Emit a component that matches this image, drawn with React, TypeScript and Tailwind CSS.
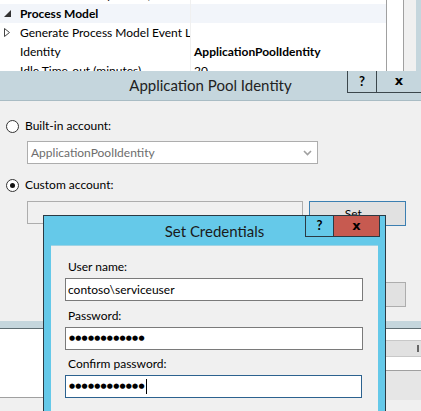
import React from 'react';

const gridRows = [
  { name: 'Processor Affinity Mask (64-bit option)', value: '4294967295' },
  { name: 'Process Model', value: '', section: true },
  { name: 'Generate Process Model Event Log Entry', value: '', collapsed: true },
  { name: 'Identity', value: 'ApplicationPoolIdentity', bold: true },
  { name: 'Idle Time-out (minutes)', value: '20' },
];

const Radio = ({ checked, label }: { checked?: boolean; label: string }) => (
  <div className="flex items-center h-[16px]">
    <div className="w-[13px] h-[13px] rounded-full border border-[#333] bg-white flex items-center justify-center">
      {checked && <div className="w-[5px] h-[5px] rounded-full bg-[#111]" />}
    </div>
    <span className="ml-[6px] leading-[16px]">{label}</span>
  </div>
);

// masked password glyphs
const Dots = () => (
  <span className="font-['DejaVu_Sans',sans-serif] text-[7px] tracking-[0.2px] leading-none">
    ●●●●●●●●●●●●
  </span>
);

const IisBackground = () => (
  <div className="flex flex-col h-full">
    <div className="flex h-[71px] bg-white">
      <div className="w-[386px] overflow-hidden">
        <div className="-mt-[15px]">
          {gridRows.map((row) => (
            <div
              key={row.name}
              className={`flex h-[19px] items-center ${row.section ? 'bg-[#f2f5fa]' : 'bg-white'}`}
            >
              <div className="w-[20px] h-full flex items-center justify-center pr-[6px]">
                {row.section && (
                  <svg width="7" height="7" viewBox="0 0 7 7">
                    <polygon points="7,0 7,7 0,7" fill="#333" />
                  </svg>
                )}
                {row.collapsed && (
                  <svg width="6" height="9" viewBox="0 0 6 9">
                    <polygon points="0.5,0.5 5.5,4.5 0.5,8.5" fill="none" stroke="#444" />
                  </svg>
                )}
              </div>
              <div
                className={`w-[170px] whitespace-nowrap overflow-hidden ${row.section ? 'font-bold' : ''}`}
              >
                {row.name}
              </div>
              <div className="w-px h-full bg-[#f0f0f0]" />
              <div className={`pl-[3px] whitespace-nowrap ${row.bold ? 'font-bold' : ''}`}>
                {row.value}
              </div>
            </div>
          ))}
        </div>
      </div>
      <div className="w-px bg-[#a0a0a0]" />
      <div className="w-[16px] bg-white" />
      <div className="w-px bg-[#a0a0a0]" />
      <div className="w-[12px] bg-[#f0f0f0]" />
      <div className="flex-1 bg-[#c5d6dd]" />
    </div>
    <div className="h-[250px]" />
    <div className="h-[7px] bg-[#c5d6dd]" />
    <div className="h-px bg-[#5f6d73]" />
    <div className="flex flex-1">
      <div className="flex-1 flex flex-col">
        <div className="h-[69px] bg-white border-b border-[#a0a0a0]" />
        <div className="flex-1 bg-[#f0f0f0]" />
      </div>
      <div className="w-[40px] flex flex-col">
        <div className="h-[11px] bg-white" />
        <div className="h-[17px] bg-[#e1e1e1] border-y border-[#c8c8c8] flex items-center justify-end gap-[2px] -mr-[2px]">
          <div className="w-[2px] h-[7px] bg-[#666]" />
          <div className="w-[2px] h-[7px] bg-[#666]" />
        </div>
        <div className="h-[14px] bg-white border-b border-[#a0a0a0]" />
        <div className="h-[29px] bg-[#e6e6e6]" />
        <div className="flex-1 bg-[#f0f0f0]" />
      </div>
    </div>
  </div>
);

const PoolIdentityDialog = () => (
  <div className="absolute left-0 top-[71px] w-[421px] h-[250px] flex flex-col bg-[#f0f0f0]">
    <div className="relative h-[30px] bg-[#c5d6dd] border-b border-[#a9bcc4] flex items-center justify-center">
      <span className="text-[15px] text-[#222]">Application Pool Identity</span>
      <div className="absolute top-0 right-0 flex">
        <div className="w-[29px] h-[22px] border-l border-b border-[#3c474c] flex items-center justify-center font-bold text-[13px]">
          ?
        </div>
        <div className="w-[45px] h-[22px] border-l border-b border-[#3c474c] flex items-center justify-center font-['DejaVu_Sans',sans-serif] font-bold text-[13px] pb-[1px]">
          x
        </div>
      </div>
    </div>
    <div className="flex flex-col pl-[6px] pt-[17px]">
      <Radio label="Built-in account:" />
      <div className="mt-[7px] ml-[21px] w-[291px] h-[23px] bg-white border border-[#adadad] flex items-center justify-between pl-[3px] pr-[5px] text-[#6d6d6d]">
        <span>ApplicationPoolIdentity</span>
        <svg width="9" height="6" viewBox="0 0 9 6">
          <polyline points="1,1 4.5,4.5 8,1" fill="none" stroke="#a0a0a0" strokeWidth="1.6" />
        </svg>
      </div>
      <div className="mt-[13px]">
        <Radio checked label="Custom account:" />
      </div>
      <div className="mt-[8px] ml-[21px] flex items-start">
        <div className="w-[276px] h-[23px] border border-[#adadad] bg-[#f0f0f0]" />
        <div className="ml-[6px] w-[97px] h-[25px] border border-[#3c7fb1] bg-[#e1e1e1] flex items-center justify-center">
          Set...
        </div>
      </div>
      <div className="mt-[56px] flex justify-end pr-[15px]">
        <div className="w-[75px] h-[25px] border border-[#adadad] bg-[#e1e1e1]" />
      </div>
    </div>
  </div>
);

const CredentialsDialog = () => (
  <div className="absolute left-[43px] top-[215px] w-[343px] h-[205px] border border-[#2b3a44] bg-[#65c9e9] flex flex-col">
    <div className="relative h-[29px] flex items-center justify-center">
      <span className="text-[15px] text-[#1a1a1a] mt-[1px]">Set Credentials</span>
      <div className="absolute -top-[1px] right-[5px] flex">
        <div className="w-[29px] h-[22px] border border-[#2b3a44] bg-[#65c9e9] flex items-center justify-center font-bold text-[13px]">
          ?
        </div>
        <div className="-ml-px w-[47px] h-[22px] border border-[#2b3a44] bg-[#c75a50] flex items-center justify-center font-['DejaVu_Sans',sans-serif] font-bold text-[13px] pb-[1px]">
          x
        </div>
      </div>
    </div>
    <div className="flex-1 mx-[7px] bg-[#f0f0f0] border-t border-[#9fd3e4] pl-[14px] pr-[15px] pt-[13px] flex flex-col">
      <div className="pl-[3px] leading-[16px]">User name:</div>
      <div className="mt-[3px] h-[23px] bg-white border border-[#7a7a7a] flex items-center pl-[2px]">
        contoso\serviceuser
      </div>
      <div className="mt-[7px] pl-[3px] leading-[16px]">Password:</div>
      <div className="mt-[3px] h-[23px] bg-white border border-[#7a7a7a] flex items-center pl-[3px]">
        <Dots />
      </div>
      <div className="mt-[6px] pl-[3px] leading-[16px]">Confirm password:</div>
      <div className="mt-[3px] h-[23px] mr-px bg-white border border-[#2c628f] flex items-center pl-[3px]">
        <Dots />
        <div className="ml-px w-px h-[15px] bg-black" />
      </div>
    </div>
  </div>
);

export default function App() {
  return (
    <div className="relative w-[421px] h-[411px] overflow-hidden bg-[#f0f0f0] font-[Lato,sans-serif] text-[12px] text-black">
      <IisBackground />
      <PoolIdentityDialog />
      <CredentialsDialog />
    </div>
  );
}
